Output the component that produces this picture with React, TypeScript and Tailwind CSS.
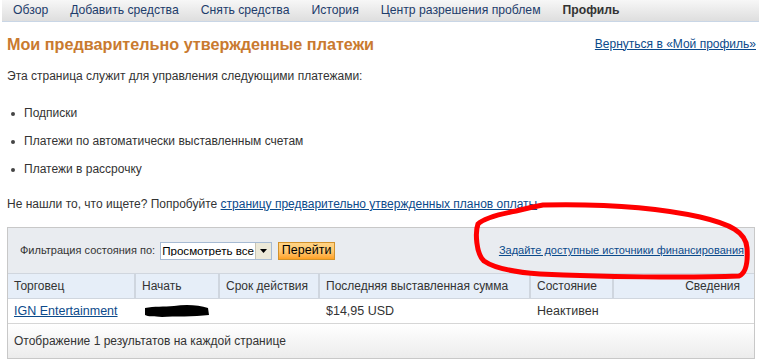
import React from 'react';

const navItems = ['Обзор', 'Добавить средства', 'Снять средства', 'История', 'Центр разрешения проблем'];

const cols = [
  { label: 'Торговец', w: 'w-[128px]' },
  { label: 'Начать', w: 'w-[84px]' },
  { label: 'Срок действия', w: 'w-[100px]' },
  { label: 'Последняя выставленная сумма', w: 'w-[211px]' },
  { label: 'Состояние', w: 'w-[83px]' },
];

export default function App() {
  return (
    <div className="relative w-[759px] h-[363px] bg-white overflow-hidden font-['Liberation_Sans',Arial,sans-serif] text-[12px] leading-[15px] text-[#333]">
      {/* Top nav */}
      <div className="ml-[2px] h-[22px] flex items-center gap-[22px] pl-[11px] border-b border-[#c9d6e6] bg-gradient-to-b from-[#f7f7f7] to-[#dedede] text-[12.2px] text-[#1d3c6b]">
        {navItems.map(n => (
          <span key={n}>{n}</span>
        ))}
        <span className="font-bold text-[#333]">Профиль</span>
      </div>

      {/* Title */}
      <div className="h-[20px] flex items-center justify-between pl-[7px] pr-[3px] mt-[12px]">
        <h1 className="text-[16.2px] font-bold text-[#c97a2f]">Мои предварительно утвержденные платежи</h1>
        <a className="text-[12px] text-[#0b4a8b] underline">Вернуться в «Мой профиль»</a>
      </div>

      <p className="pl-[7px] mt-[15px]">Эта страница служит для управления следующими платежами:</p>

      <ul className="pl-[11px] mt-[22px] flex flex-col gap-[13px]">
        {['Подписки', 'Платежи по автоматически выставленным счетам', 'Платежи в рассрочку'].map(t => (
          <li key={t} className="flex items-center gap-[9px]">
            <span className="w-[4px] h-[4px] rounded-full bg-[#444]" />
            <span>{t}</span>
          </li>
        ))}
      </ul>

      <p className="pl-[7px] mt-[20px]">
        Не нашли то, что ищете? Попробуйте{' '}
        <a className="text-[#0b4a8b] underline">страницу предварительно утвержденных планов оплаты</a>
      </p>

      {/* Table box */}
      <div className="ml-[7px] w-[748px] mt-[15px] border border-[#c8c8c8]">
        <div className="h-[45px] bg-[#e9ecf0] flex items-center pl-[12px] pr-[10px]">
          <span className="text-[11px] text-[#333]">Фильтрация состояния по:</span>
          <div className="ml-[5px] w-[112px] h-[18px] border border-[#a7bbd3] bg-white flex items-center">
            <span className="flex-1 pl-[1px] text-[11.6px] text-black leading-none whitespace-nowrap overflow-hidden">Просмотреть все</span>
            <span className="w-[16px] h-[16px] shrink-0 bg-[#ece9d8] border-l border-[#c8c4b4] flex items-center justify-center">
              <svg width="7" height="4" viewBox="0 0 7 4"><path d="M0 0h7L3.5 4z" fill="#000" /></svg>
            </span>
          </div>
          <button className="ml-[6px] w-[57px] h-[18px] border border-[#d2922c] bg-gradient-to-b from-[#ffd384] via-[#ffc870] to-[#ffa11e] text-[12.5px] text-black leading-none">
            Перейти
          </button>
          <a className="ml-auto text-[11px] text-[#0b4a8b] underline">Задайте доступные источники финансирования</a>
        </div>

        <div className="h-[26px] flex bg-[#e6eef8] border-t border-b border-[#d0d6de] text-[12px] text-[#333]">
          {cols.map(c => (
            <div key={c.label} className={`${c.w} flex items-center pl-[6px] border-r-2 border-[#cfd6df]`}>{c.label}</div>
          ))}
          <div className="flex-1 flex items-center justify-end pr-[14px]">Сведения</div>
        </div>

        <div className="h-[25px] flex items-center border-b border-[#d6d6d6] text-[12.5px]">
          <div className="w-[128px] pl-[6px]">
            <a className="text-[#0b4a8b] underline">IGN Entertainment</a>
          </div>
          <div className="w-[84px] pl-[8px]">
            <svg width="66" height="14" viewBox="0 0 66 14">
              <path d="M1 4 C10 2 20 3 30 2 C42 0 55 1 64 4 L65 11 C50 13 30 12 18 13 C10 12 4 13 1 11 Z" fill="#000" />
            </svg>
          </div>
          <div className="w-[100px]" />
          <div className="w-[211px] pl-[6px] text-[#333]">$14,95 USD</div>
          <div className="w-[83px] pl-[6px] text-[#333]">Неактивен</div>
        </div>

        <div className="h-[34px] flex items-center pl-[6px] bg-gradient-to-b from-white to-[#ececec] text-[#333]">
          Отображение 1 результатов на каждой странице
        </div>
      </div>

      {/* Red annotation */}
      <svg className="absolute left-0 top-0 pointer-events-none" width="759" height="363" viewBox="0 0 759 363">
        <path
          d="M543 205 C590 204 650 206 700 217 C730 224 746 232 747 248 C748 262 746 273 739 276 C690 278 600 277 540 274 C512 272 494 268 484 261 C476 254 475 232 478 224 C484 218 500 214 516 211 C528 208 537 206 543 205"
          fill="none"
          stroke="#ff0000"
          strokeWidth="5"
          strokeLinecap="round"
        />
      </svg>
    </div>
  );
}
